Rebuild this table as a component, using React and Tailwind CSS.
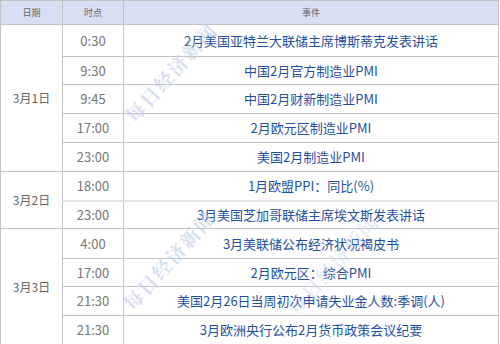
const rows = [
    { date: '3月1日', span: 5, time: '0:30', event: '2月美国亚特兰大联储主席博斯蒂克发表讲话', h: 'h-[32px]' },
    { time: '9:30', event: '中国2月官方制造业PMI', h: 'h-[28px]' },
    { time: '9:45', event: '中国2月财新制造业PMI', h: 'h-[29px]' },
    { time: '17:00', event: '2月欧元区制造业PMI', h: 'h-[29px]' },
    { time: '23:00', event: '美国2月制造业PMI', h: 'h-[29px]' },
    { date: '3月2日', span: 2, time: '18:00', event: '1月欧盟PPI：同比(%)', h: 'h-[29px]' },
    { time: '23:00', event: '3月美国芝加哥联储主席埃文斯发表讲话', h: 'h-[28px]', soft: true },
    { date: '3月3日', span: 4, time: '4:00', event: '3月美联储公布经济状况褐皮书', h: 'h-[30px]' },
    { time: '17:00', event: '2月欧元区：综合PMI', h: 'h-[28px]' },
    { time: '21:30', event: '美国2月26日当周初次申请失业金人数:季调(人)', h: 'h-[29px]' },
    { time: '21:30', event: '3月欧洲央行公布2月货币政策会议纪要', h: 'h-[29px]' },
];

const Watermark = ({ className }) => (
    <div
        className={`absolute pointer-events-none select-none whitespace-nowrap font-bold text-[19px] tracking-[2px] text-[#b9cbe6] -rotate-[48deg] ${className}`}
        style={{ fontFamily: '"Noto Serif CJK SC", "Noto Sans CJK SC", serif' }}
    >
        每日经济新闻
    </div>
);

const App = () => {
    return (
        <div
            className="relative w-[500px] h-[344px] bg-white overflow-hidden"
            style={{ fontFamily: '"Noto Sans CJK SC", "Noto Sans", sans-serif' }}
        >
            <table className="w-[499px] border-collapse table-fixed">
                <colgroup>
                    <col className="w-[62px]" />
                    <col className="w-[61px]" />
                    <col />
                </colgroup>
                <thead>
                    <tr className="h-[24px] bg-[#d9dff2]">
                        <th className="border border-[#c4c4c4] text-[9px] font-normal text-[#666]">日期</th>
                        <th className="border border-[#c4c4c4] text-[9px] font-normal text-[#666]">时点</th>
                        <th className="border border-[#c4c4c4] text-[9px] font-normal text-[#666]">事件</th>
                    </tr>
                </thead>
                <tbody>
                    {rows.map((r, i) => (
                        <tr key={i} className={r.h}>
                            {r.date && (
                                <td
                                    rowSpan={r.span}
                                    className="border border-[#c4c4c4] text-center text-[12px] text-[#666] p-0"
                                >
                                    {r.date}
                                </td>
                            )}
                            <td
                                className={`border border-[#c4c4c4] text-center text-[13px] text-[#777] p-0 ${
                                    r.soft ? 'border-t-2 border-t-[#e2e2e2]' : ''
                                }`}
                            >
                                {r.time}
                            </td>
                            <td
                                className={`border border-[#c4c4c4] text-center text-[13px] text-[#1f4f9e] p-0 whitespace-nowrap ${
                                    r.soft ? 'border-t-2 border-t-[#e2e2e2]' : ''
                                }`}
                            >
                                {r.event}
                            </td>
                        </tr>
                    ))}
                </tbody>
            </table>

            <Watermark className="left-[108px] top-[58px] opacity-60" />
            <Watermark className="left-[106px] top-[246px] opacity-60" />
            <Watermark className="left-[270px] top-[250px] opacity-35" />
        </div>
    );
};

export default App;
